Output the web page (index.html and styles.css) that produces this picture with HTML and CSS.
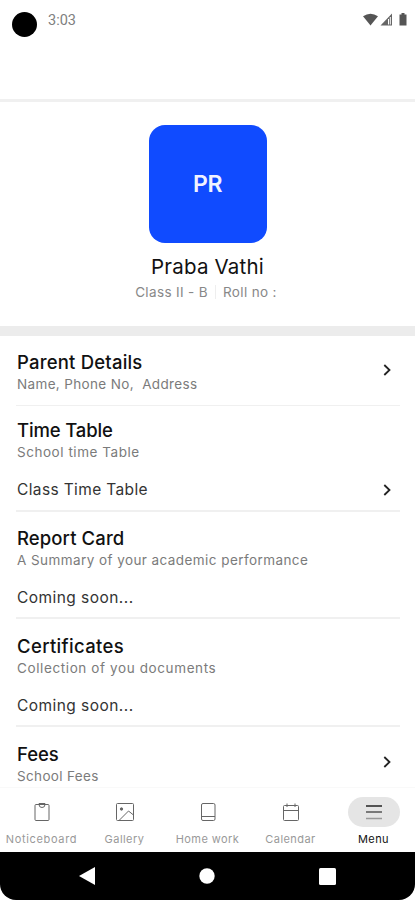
FILE: index.html
```html
<!DOCTYPE html>
<html lang="en">
<head>
<meta charset="utf-8">
<title>Menu</title>
<link rel="stylesheet" href="styles.css">
</head>
<body>
<div class="phone">
  <header class="status">
    <span class="camera"></span>
    <span class="clock">3:03</span>
    <svg class="signals" width="46" height="16" viewBox="0 0 46 16">
      <path d="M0 4.3Q7.500-1 15 4.300L7.500 13.500z" fill="#555"/>
      <path d="M29 1.500V13.500H17.500z" fill="#666"/>
      <path d="M25.500 7V12.500M27.300 5V12.500" stroke="#fff" stroke-width="1"/>
      <path d="M36.500 2.500H38.500V1H41.500V2.500H43.500V13.500H36.500z" fill="#555"/>
    </svg>
  </header>
  <section class="profile">
    <div class="avatar"><span>PR</span></div>
    <h1 class="name"><span>Praba Vathi</span></h1>
    <div class="meta"><span>Class II - B</span><i class="bar"></i><span>Roll no :</span></div>
  </section>
  <main class="list">
    <section class="group parent">
      <div><h2><span>Parent Details</span></h2><p class="sub"><span>Name, Phone No,&nbsp; Address</span></p></div>
      <svg class="chevron" width="8" height="12" viewBox="0 0 8 12"><path d="M1.300 1L6.500 6L1.300 11"/></svg>
    </section>
    <section class="group time">
      <h2><span>Time Table</span></h2><p class="sub"><span>School time Table</span></p>
      <div class="item"><span>Class Time Table</span><svg class="chevron" width="8" height="12" viewBox="0 0 8 12"><path d="M1.300 1L6.500 6L1.300 11"/></svg></div>
    </section>
    <section class="group report">
      <h2><span>Report Card</span></h2><p class="sub"><span>A Summary of your academic performance</span></p>
      <div class="item"><span>Coming soon...</span></div>
    </section>
    <section class="group certs">
      <h2><span>Certificates</span></h2><p class="sub"><span>Collection of you documents</span></p>
      <div class="item"><span>Coming soon...</span></div>
    </section>
    <section class="group fees">
      <div><h2><span>Fees</span></h2><p class="sub"><span>School Fees</span></p></div>
      <svg class="chevron" width="8" height="12" viewBox="0 0 8 12"><path d="M1.300 1L6.500 6L1.300 11"/></svg>
    </section>
  </main>
  <nav class="tabs">
    <a class="tab"><span class="pill"><svg width="20" height="20" viewBox="0 0 20 20"><rect x="3" y="2.500" width="14" height="16" rx="1"/><path d="M7 2.500V1.500H13V2.500M7 2.500Q7 5.500 10 5.500T13 2.500"/></svg></span><span class="label">Noticeboard</span></a>
    <a class="tab"><span class="pill"><svg width="20" height="20" viewBox="0 0 20 20"><rect x="1.500" y="1.500" width="17" height="17" rx="1"/><circle cx="6.500" cy="7" r="1.200" fill="#666"/><path d="M4 18.500L13.500 9L18.500 13"/></svg></span><span class="label">Gallery</span></a>
    <a class="tab"><span class="pill"><svg width="20" height="20" viewBox="0 0 20 20"><rect x="3.500" y="1.500" width="13.500" height="17" rx="1.500"/><path d="M3.500 14.500H17"/></svg></span><span class="label">Home work</span></a>
    <a class="tab"><span class="pill"><svg width="20" height="20" viewBox="0 0 20 20"><rect x="2.500" y="3.500" width="15" height="15" rx="1"/><path d="M2.500 8.500H17.500M6 1.500V5M14 1.500V5"/></svg></span><span class="label">Calendar</span></a>
    <a class="tab active"><span class="pill"><svg width="20" height="20" viewBox="0 0 20 20"><path d="M2 4H18"/><path d="M2 10H18" stroke="#555"/><path d="M2 16.500H18" stroke="#999"/></svg></span><span class="label">Menu</span></a>
  </nav>
  <footer class="system">
    <svg width="16" height="18" viewBox="0 0 16 18"><path d="M16 0V18L0 9z"/></svg>
    <svg width="16" height="16" viewBox="0 0 16 16"><circle cx="8" cy="8" r="7.700"/></svg>
    <svg width="17" height="17" viewBox="0 0 17 17"><rect width="17" height="17" rx="1.500"/></svg>
  </footer>
</div>
</body>
</html>
```
FILE: styles.css
```css
* { box-sizing: border-box; margin: 0; padding: 0; }
body { width: 415px; height: 900px; overflow: hidden; background: #fff; font-family: Inter, "Liberation Sans", sans-serif; color: #111; }
.phone { height: 900px; display: flex; flex-direction: column; }
.status { height: 102px; flex: none; display: flex; align-items: flex-start; border-bottom: 3px solid #f0f0f0; padding: 11px 6px 0 12px; }
.camera { width: 25px; height: 25px; border-radius: 50%; background: #000; margin-top: 1px; }
.clock { font: 14.500px/20px Roboto, sans-serif; color: #808080; margin-left: 11px; }
.signals { margin: 1px 0 0 auto; }
.profile { height: 234px; flex: none; border-bottom: 10px solid #ececec; display: flex; flex-direction: column; align-items: center; padding-top: 23px; }
.avatar { width: 118px; height: 118px; border-radius: 16px; background: #104bff; color: #f0f2ff; display: flex; align-items: center; justify-content: center; font-size: 23px; font-weight: 600; letter-spacing: -.3px; }
.name { font-size: 20.500px; line-height: 28px; font-weight: 400; margin-top: 10px; letter-spacing: .2px; }
.meta { display: flex; align-items: center; font-size: 13.500px; line-height: 20px; color: #888; margin-top: 1px; letter-spacing: .35px; margin-right: 3px; }
.bar { width: 1px; height: 14px; background: #eee; margin: 0 7px; }
.list { flex: 1; min-height: 0; overflow: hidden; padding: 0 15px 0 16px; }
.group { border-bottom: 2px solid #f0f0f0; padding: 14px 0 0 1px; }
.group h2 { font-size: 18.500px; line-height: 24px; font-weight: 450; letter-spacing: .2px; }
.sub { font-size: 13.500px; line-height: 20px; color: #7b7b7b; letter-spacing: .43px; white-space: nowrap; }
.item { display: flex; align-items: center; justify-content: space-between; font-size: 15.500px; line-height: 24px; margin-top: 16px; color: #333; letter-spacing: .37px; }
.chevron { fill: none; stroke: #222; stroke-width: 1.800; margin-right: 9px; flex: none; }
.parent { height: 70px; display: flex; justify-content: space-between; border-bottom-width: 1px; }
.parent .sub, .fees .sub { letter-spacing: .35px; }
.parent .chevron, .fees .chevron { margin-top: 14px; }
.time { height: 106px; padding-top: 12px; }
.group.time h2 { letter-spacing: -.15px; }
.time .sub { letter-spacing: .54px; }
.report { height: 107px; }
.group.report h2 { letter-spacing: .1px; }
.certs { height: 108px; padding-top: 15px; }
.group.certs h2 { letter-spacing: .35px; }
.certs .sub { letter-spacing: .61px; }
.certs .item, .report .item { letter-spacing: .45px; }
.fees { display: flex; justify-content: space-between; padding-top: 15px; border: 0; }
.group.fees h2 { letter-spacing: -.1px; }
.tabs { height: 65px; flex: none; display: flex; border-top: 1px solid #f9f9f9; padding-top: 9px; }
.tab { flex: 1; display: flex; flex-direction: column; align-items: center; }
.pill { width: 52px; height: 30px; border-radius: 15px; display: flex; align-items: center; justify-content: center; }
.pill svg { fill: none; stroke: #666; stroke-width: 1; }
.label { font-size: 11px; line-height: 14px; margin-top: 5px; color: #999; letter-spacing: .45px; white-space: nowrap; }
.tab:first-child .label { letter-spacing: .65px; }
.active .pill { background: #e5e5e5; }
.active svg { stroke: #222; stroke-width: 1.500; }
.active .label { color: #111; }
.system { height: 48px; flex: none; background: #000; border-radius: 0 0 16px 16px; display: flex; align-items: center; justify-content: space-between; padding: 0 79px; }
.system svg { fill: #fff; }
```
